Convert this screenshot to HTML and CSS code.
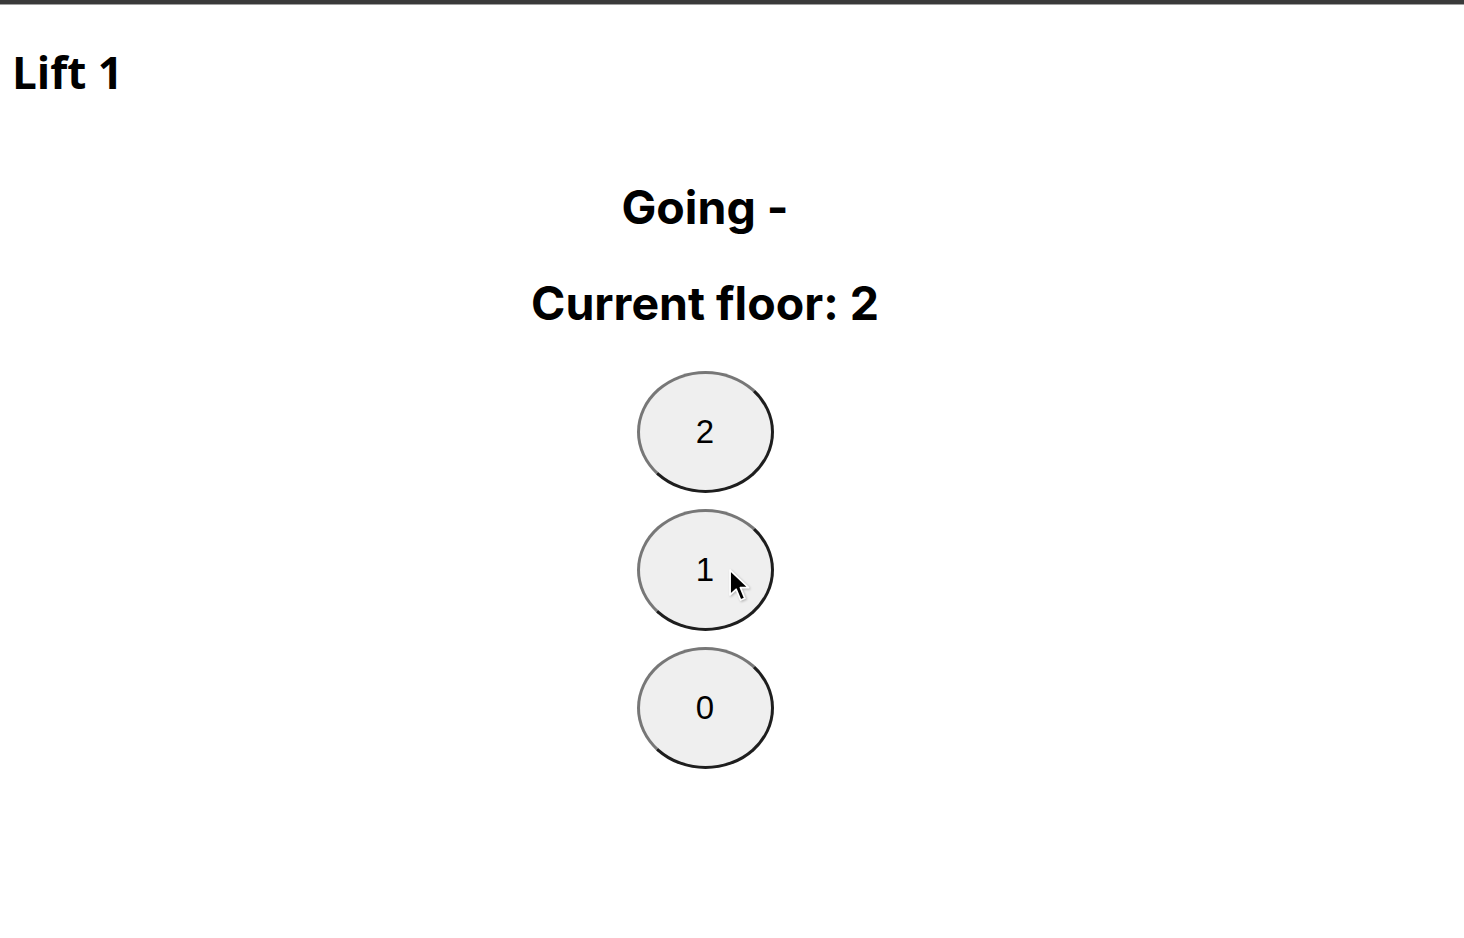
FILE: index.html
```html
<!DOCTYPE html>
<html>
<head>
<meta charset="utf-8">
<link rel="stylesheet" href="styles.css">
</head>
<body>
<div class="topbar"></div>
<div class="page">
  <h1 class="title">Lift 1</h1>
  <main class="lift">
    <h2 class="status">Going -</h2>
    <h2 class="status floor">Current floor: 2</h2>
    <div class="buttons">
      <button class="floor-btn">2</button>
      <button class="floor-btn hover">1
        <svg class="cursor" width="23" height="35" viewBox="0 0 17 26"><path d="M1.5 1.5 L1.5 20 L6 15.8 L9.3 23.8 L12.5 22.5 L9.2 14.6 L15.2 14.6 Z" fill="#000" stroke="#fff" stroke-width="1.3" stroke-linejoin="round"/></svg>
      </button>
      <button class="floor-btn">0</button>
    </div>
  </main>
</div>
</body>
</html>
```

FILE: styles.css
```css
html, body {
  margin: 0;
  padding: 0;
  background: #fff;
}
body {
  font-family: "Inter", "Liberation Sans", sans-serif;
  color: #000;
}
.topbar {
  height: 4px;
  background: #3a3a3a;
  border-bottom: 1px solid #a0a0a0;
}
.page {
  width: 1410px;
}
.title {
  margin: 0;
  padding: 42px 0 0 12px;
  font-family: "Open Sans", "Inter", sans-serif;
  font-size: 44px;
  font-weight: 700;
  line-height: 50px;
}
.lift {
  display: flex;
  flex-direction: column;
  align-items: center;
  margin-top: 84px;
}
.status {
  margin: 0;
  font-size: 46.5px;
  font-weight: 700;
  line-height: 52px;
}
.floor {
  margin-top: 44px;
}
.buttons {
  display: flex;
  flex-direction: column;
  align-items: center;
  gap: 16px;
  margin-top: 42px;
}
.floor-btn {
  position: relative;
  width: 137px;
  height: 122px;
  border-radius: 50%;
  border: 3px solid;
  border-top-color: #777;
  border-left-color: #777;
  border-right-color: #1e1e1e;
  border-bottom-color: #1e1e1e;
  background: #efefef;
  font-family: "Liberation Sans", Arial, sans-serif;
  font-size: 33px;
  color: #000;
  padding: 0;
}
.cursor {
  position: absolute;
  left: 88px;
  top: 56px;
  filter: drop-shadow(1px 1px 1px rgba(0,0,0,0.25));
}
```
